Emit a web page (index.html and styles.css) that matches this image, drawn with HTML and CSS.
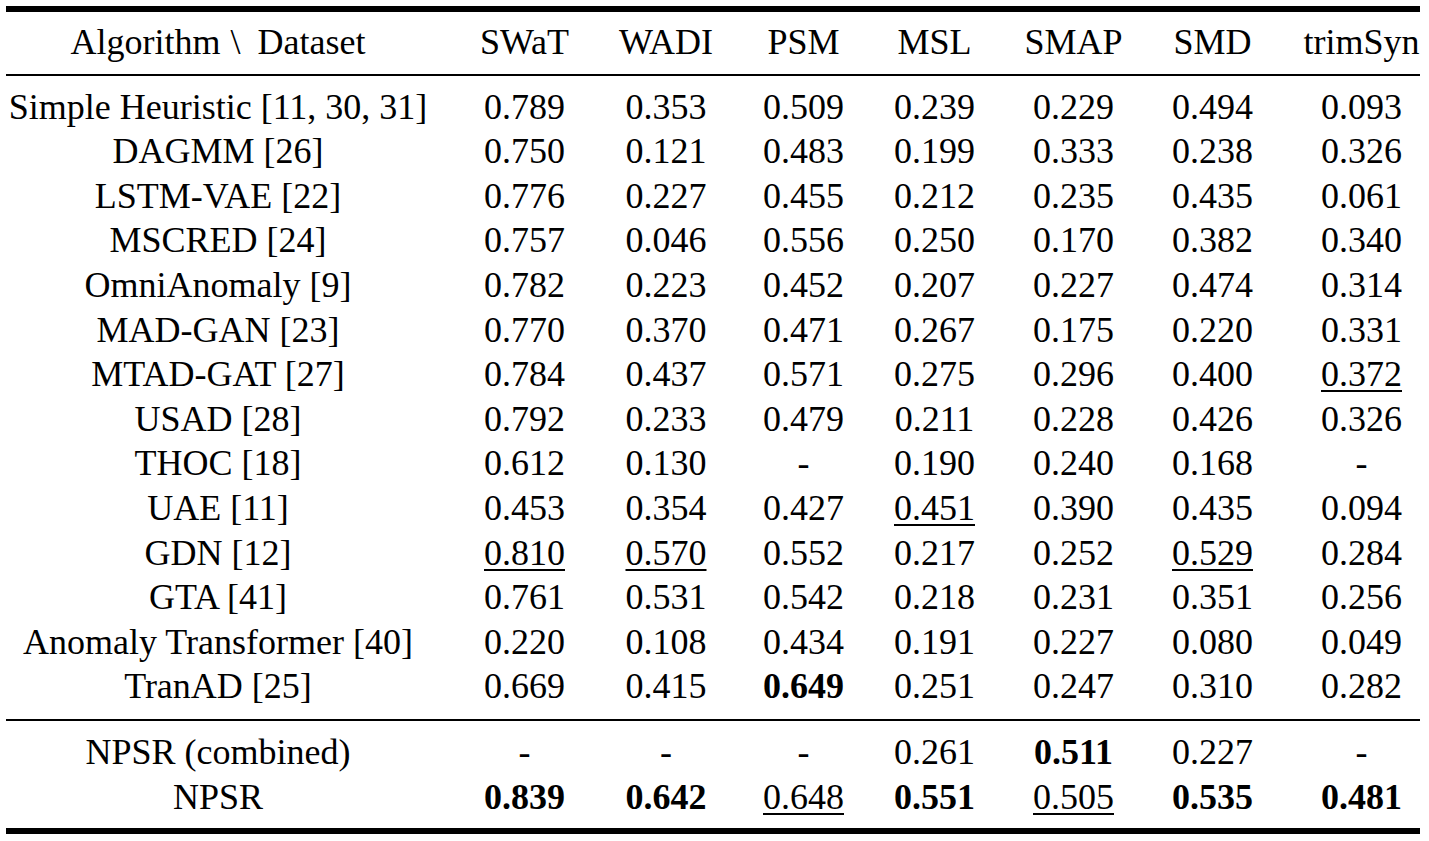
FILE: index.html
```html
<!DOCTYPE html>
<html>
<head>
<meta charset="utf-8">
<link rel="stylesheet" href="styles.css">
</head>
<body>
<div class="table">
  <div class="rule thick"></div>
  <div class="section head">
    <div class="row"><span class="c name">Algorithm <span class="bs">\</span> Dataset</span><span class="c">SWaT</span><span class="c">WADI</span><span class="c">PSM</span><span class="c">MSL</span><span class="c">SMAP</span><span class="c">SMD</span><span class="c last">trimSyn</span></div>
  </div>
  <div class="rule thin"></div>
  <div class="section body">
    <div class="row"><span class="c name">Simple Heuristic [11, 30, 31]</span><span class="c">0.789</span><span class="c">0.353</span><span class="c">0.509</span><span class="c">0.239</span><span class="c">0.229</span><span class="c">0.494</span><span class="c last">0.093</span></div>
    <div class="row"><span class="c name">DAGMM [26]</span><span class="c">0.750</span><span class="c">0.121</span><span class="c">0.483</span><span class="c">0.199</span><span class="c">0.333</span><span class="c">0.238</span><span class="c last">0.326</span></div>
    <div class="row"><span class="c name">LSTM-VAE [22]</span><span class="c">0.776</span><span class="c">0.227</span><span class="c">0.455</span><span class="c">0.212</span><span class="c">0.235</span><span class="c">0.435</span><span class="c last">0.061</span></div>
    <div class="row"><span class="c name">MSCRED [24]</span><span class="c">0.757</span><span class="c">0.046</span><span class="c">0.556</span><span class="c">0.250</span><span class="c">0.170</span><span class="c">0.382</span><span class="c last">0.340</span></div>
    <div class="row"><span class="c name">OmniAnomaly [9]</span><span class="c">0.782</span><span class="c">0.223</span><span class="c">0.452</span><span class="c">0.207</span><span class="c">0.227</span><span class="c">0.474</span><span class="c last">0.314</span></div>
    <div class="row"><span class="c name">MAD-GAN [23]</span><span class="c">0.770</span><span class="c">0.370</span><span class="c">0.471</span><span class="c">0.267</span><span class="c">0.175</span><span class="c">0.220</span><span class="c last">0.331</span></div>
    <div class="row"><span class="c name">MTAD-GAT [27]</span><span class="c">0.784</span><span class="c">0.437</span><span class="c">0.571</span><span class="c">0.275</span><span class="c">0.296</span><span class="c">0.400</span><span class="c last"><u>0.372</u></span></div>
    <div class="row"><span class="c name">USAD [28]</span><span class="c">0.792</span><span class="c">0.233</span><span class="c">0.479</span><span class="c">0.211</span><span class="c">0.228</span><span class="c">0.426</span><span class="c last">0.326</span></div>
    <div class="row"><span class="c name">THOC [18]</span><span class="c">0.612</span><span class="c">0.130</span><span class="c">-</span><span class="c">0.190</span><span class="c">0.240</span><span class="c">0.168</span><span class="c last">-</span></div>
    <div class="row"><span class="c name">UAE [11]</span><span class="c">0.453</span><span class="c">0.354</span><span class="c">0.427</span><span class="c"><u>0.451</u></span><span class="c">0.390</span><span class="c">0.435</span><span class="c last">0.094</span></div>
    <div class="row"><span class="c name">GDN [12]</span><span class="c"><u>0.810</u></span><span class="c"><u>0.570</u></span><span class="c">0.552</span><span class="c">0.217</span><span class="c">0.252</span><span class="c"><u>0.529</u></span><span class="c last">0.284</span></div>
    <div class="row"><span class="c name">GTA [41]</span><span class="c">0.761</span><span class="c">0.531</span><span class="c">0.542</span><span class="c">0.218</span><span class="c">0.231</span><span class="c">0.351</span><span class="c last">0.256</span></div>
    <div class="row"><span class="c name">Anomaly Transformer [40]</span><span class="c">0.220</span><span class="c">0.108</span><span class="c">0.434</span><span class="c">0.191</span><span class="c">0.227</span><span class="c">0.080</span><span class="c last">0.049</span></div>
    <div class="row"><span class="c name">TranAD [25]</span><span class="c">0.669</span><span class="c">0.415</span><span class="c"><b>0.649</b></span><span class="c">0.251</span><span class="c">0.247</span><span class="c">0.310</span><span class="c last">0.282</span></div>
  </div>
  <div class="rule thin"></div>
  <div class="section foot">
    <div class="row"><span class="c name">NPSR (combined)</span><span class="c">-</span><span class="c">-</span><span class="c">-</span><span class="c">0.261</span><span class="c"><b>0.511</b></span><span class="c">0.227</span><span class="c last">-</span></div>
    <div class="row"><span class="c name">NPSR</span><span class="c"><b>0.839</b></span><span class="c"><b>0.642</b></span><span class="c"><u>0.648</u></span><span class="c"><b>0.551</b></span><span class="c"><u>0.505</u></span><span class="c"><b>0.535</b></span><span class="c last"><b>0.481</b></span></div>
  </div>
  <div class="rule thick bottom"></div>
</div>
</body>
</html>
```
FILE: styles.css
```css
html, body {
  margin: 0;
  padding: 0;
  background: #ffffff;
}

.table {
  margin-left: 6px;
  width: 1414px;
  font-family: "Liberation Serif", "Times New Roman", serif;
  font-size: 36px;
  color: #000000;
}

.rule {
  background: #000000;
}

.rule.thick {
  height: 6px;
  margin-top: 6px;
}

.rule.thick.bottom {
  margin-top: 0;
}

.rule.thin {
  height: 2px;
}

.section.head {
  padding-top: 7.5px;
  padding-bottom: 10px;
}

.section.body {
  padding-top: 8.5px;
  padding-bottom: 10px;
}

.section.foot {
  padding-top: 9.5px;
  padding-bottom: 8.3px;
}

.row {
  display: grid;
  grid-template-columns: 449px 139px 144px 131px 131px 147px 131px 142px;
  line-height: 44.6px;
  height: 44.6px;
}

.c {
  text-align: center;
  white-space: nowrap;
}

.c.name {
  padding-right: 25px;
}

.c.last {
  padding-left: 25px;
}

.bs {
  margin-left: 1px;
  margin-right: 8px;
}

u {
  text-decoration: underline;
  text-decoration-thickness: 1.5px;
  text-underline-offset: 4px;
}

b {
  font-weight: bold;
}
```
